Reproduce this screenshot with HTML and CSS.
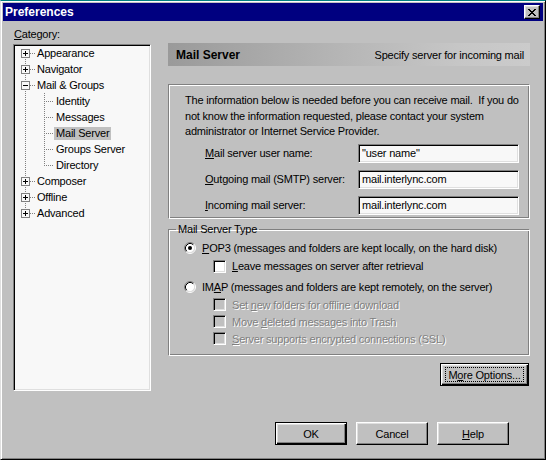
FILE: index.html
```html
<!DOCTYPE html>
<html>
<head>
<meta charset="utf-8">
<title>Preferences</title>
<link rel="stylesheet" href="styles.css">
</head>
<body>
<div class="window">
  <div class="titlebar">
    <span class="title">Preferences</span>
    <span class="close"><svg width="8" height="7" viewBox="0 0 8 7"><path d="M0 0h2v1h-2zM6 0h2v1h-2zM1 1h2v1h-2zM5 1h2v1h-2zM2 2h4v1h-4zM3 3h2v1h-2zM2 4h4v1h-4zM1 5h2v1h-2zM5 5h2v1h-2zM0 6h2v1h-2zM6 6h2v1h-2z" fill="#000"/></svg></span>
  </div>
  <div class="main">
    <div class="left">
      <div class="cat-label"><u>C</u>ategory:</div>
      <div class="tree">
        <div class="row"><span class="g first"><span class="pm"><svg width="9" height="9"><rect x="0.5" y="0.5" width="8" height="8" fill="#f8f8f8" stroke="#808080"/><rect x="2" y="4" width="5" height="1"/><rect x="4" y="2" width="1" height="5"/></svg></span></span><span class="lbl">Appearance</span></div>
        <div class="row"><span class="g mid"><span class="pm"><svg width="9" height="9"><rect x="0.5" y="0.5" width="8" height="8" fill="#f8f8f8" stroke="#808080"/><rect x="2" y="4" width="5" height="1"/><rect x="4" y="2" width="1" height="5"/></svg></span></span><span class="lbl">Navigator</span></div>
        <div class="row"><span class="g mid"><span class="pm"><svg width="9" height="9"><rect x="0.5" y="0.5" width="8" height="8" fill="#f8f8f8" stroke="#808080"/><rect x="2" y="4" width="5" height="1"/></svg></span></span><span class="lbl">Mail &amp; Groups</span></div>
        <div class="row"><span class="g vline"></span><span class="g2 mid"></span><span class="lbl">Identity</span></div>
        <div class="row"><span class="g vline"></span><span class="g2 mid"></span><span class="lbl">Messages</span></div>
        <div class="row"><span class="g vline"></span><span class="g2 mid"></span><span class="lbl sel">Mail Server</span></div>
        <div class="row"><span class="g vline"></span><span class="g2 mid"></span><span class="lbl">Groups Server</span></div>
        <div class="row"><span class="g vline"></span><span class="g2 last"></span><span class="lbl">Directory</span></div>
        <div class="row"><span class="g mid"><span class="pm"><svg width="9" height="9"><rect x="0.5" y="0.5" width="8" height="8" fill="#f8f8f8" stroke="#808080"/><rect x="2" y="4" width="5" height="1"/><rect x="4" y="2" width="1" height="5"/></svg></span></span><span class="lbl">Composer</span></div>
        <div class="row"><span class="g mid"><span class="pm"><svg width="9" height="9"><rect x="0.5" y="0.5" width="8" height="8" fill="#f8f8f8" stroke="#808080"/><rect x="2" y="4" width="5" height="1"/><rect x="4" y="2" width="1" height="5"/></svg></span></span><span class="lbl">Offline</span></div>
        <div class="row"><span class="g last"><span class="pm"><svg width="9" height="9"><rect x="0.5" y="0.5" width="8" height="8" fill="#f8f8f8" stroke="#808080"/><rect x="2" y="4" width="5" height="1"/><rect x="4" y="2" width="1" height="5"/></svg></span></span><span class="lbl">Advanced</span></div>
      </div>
    </div>
    <div class="right">
      <div class="header"><span class="h-title">Mail Server</span><span class="h-desc">Specify server for incoming mail</span></div>
      <div class="infobox">
        <p class="info">The information below is needed before you can receive mail.&nbsp; If you do<br>not know the information requested, please contact your system<br>administrator or Internet Service Provider.</p>
        <div class="frow"><span class="flabel"><u>M</u>ail server user name:</span><span class="input">"user name"</span></div>
        <div class="frow"><span class="flabel"><u>O</u>utgoing mail (SMTP) server:</span><span class="input">mail.interlync.com</span></div>
        <div class="frow"><span class="flabel"><u>I</u>ncoming mail server:</span><span class="input">mail.interlync.com</span></div>
      </div>
      <fieldset class="type">
        <legend>Mail Server Type</legend>
        <div class="opt lv1"><svg class="radio" width="12" height="12" viewBox="0 0 12 12"><circle cx="6" cy="6" r="4.5" fill="#fff"/><path d="M2.11 9.89A5.5 5.5 0 0 1 9.89 2.11" fill="none" stroke="#808080"/><path d="M9.89 2.11A5.5 5.5 0 0 1 2.11 9.89" fill="none" stroke="#fff"/><path d="M2.82 9.18A4.5 4.5 0 0 1 9.18 2.82" fill="none" stroke="#000"/><path d="M9.18 2.82A4.5 4.5 0 0 1 2.82 9.18" fill="none" stroke="#dfdfdf"/><circle cx="6" cy="6" r="2" fill="#000"/></svg><span class="otext"><u>P</u>OP3 (messages and folders are kept locally, on the hard disk)</span></div>
        <div class="opt lv2"><span class="check"></span><span class="otext"><u>L</u>eave messages on server after retrieval</span></div>
        <div class="opt lv1 gap"><svg class="radio" width="12" height="12" viewBox="0 0 12 12"><circle cx="6" cy="6" r="4.5" fill="#fff"/><path d="M2.11 9.89A5.5 5.5 0 0 1 9.89 2.11" fill="none" stroke="#808080"/><path d="M9.89 2.11A5.5 5.5 0 0 1 2.11 9.89" fill="none" stroke="#fff"/><path d="M2.82 9.18A4.5 4.5 0 0 1 9.18 2.82" fill="none" stroke="#000"/><path d="M9.18 2.82A4.5 4.5 0 0 1 2.82 9.18" fill="none" stroke="#dfdfdf"/></svg><span class="otext">IM<u>A</u>P (messages and folders are kept remotely, on the server)</span></div>
        <div class="opt lv2 dis"><span class="check off"></span><span class="otext">Set <u>n</u>ew folders for offline download</span></div>
        <div class="opt lv2 dis"><span class="check off"></span><span class="otext">Move <u>d</u>eleted messages into Trash</span></div>
        <div class="opt lv2 dis"><span class="check off"></span><span class="otext"><u>S</u>erver supports encrypted connections (SSL)</span></div>
      </fieldset>
      <div class="more-row"><span class="btn default more"><span class="focus">M<u>o</u>re Options...</span></span></div>
    </div>
  </div>
  <div class="buttons">
    <span class="btn default">OK</span>
    <span class="btn">Cancel</span>
    <span class="btn"><u>H</u>elp</span>
  </div>
</div>
</body>
</html>
```
FILE: styles.css
```css
html, body {
  margin: 0;
  padding: 0;
}
body {
  background: #c0c0c0;
  font-family: "Liberation Sans", Arial, sans-serif;
  font-size: 11px;
  letter-spacing: -0.2px;
  color: #000;
}
u { text-decoration: underline; text-underline-offset: 1px; }

.window {
  width: 546px;
  height: 460px;
  box-sizing: border-box;
  border: 1px solid;
  border-color: #008080 #000 #000 #dfdfdf;
  box-shadow: inset 1px 1px #fff, inset -1px -1px #808080;
  padding: 2px;
  display: flex;
  flex-direction: column;
  background: #c0c0c0;
}

.titlebar {
  height: 18px;
  flex: none;
  background: #000080;
  color: #fff;
  display: flex;
  align-items: center;
  justify-content: space-between;
  padding: 0 3px 0 2px;
}
.title {
  font-weight: bold;
  font-size: 12px;
  letter-spacing: 0;
}
.close {
  width: 16px;
  height: 14px;
  box-sizing: border-box;
  background: #c0c0c0;
  border: 1px solid;
  border-color: #fff #000 #000 #fff;
  box-shadow: inset -1px -1px #808080, inset 1px 1px #dfdfdf;
  display: flex;
  align-items: center;
  justify-content: center;
}

.main {
  display: flex;
  gap: 17px;
  padding: 0 13px 0 10px;
  height: 370px;
  flex: none;
}
.left {
  width: 138px;
  flex: none;
  display: flex;
  flex-direction: column;
}
.cat-label {
  margin-top: 7px;
  line-height: 13px;
  padding-left: 1px;
}
.tree {
  margin-top: 3px;
  height: 347px;
  box-sizing: border-box;
  border: 1px solid;
  border-color: #808080 #fff #fff #808080;
  box-shadow: inset 1px 1px #000, inset -1px -1px #dfdfdf;
  background: #f8f8f8;
  padding: 0 1px;
}
.row {
  display: flex;
  height: 16px;
  align-items: center;
}
.g, .g2 {
  flex: none;
  height: 16px;
  background-repeat: no-repeat;
}
.g { width: 20px; }
.g2 { width: 19px; }
.pm {
  display: block;
  width: 9px;
  height: 9px;
  margin: 4px 0 0 6px;
}
.pm svg { display: block; }

.g.first {
  background-image:
    repeating-linear-gradient(to bottom, #808080 0 1px, transparent 1px 2px),
    repeating-linear-gradient(to right, #808080 0 1px, transparent 1px 2px);
  background-size: 1px 8px, 5px 1px;
  background-position: 10px 8px, 15px 8px;
}
.g.mid {
  background-image:
    repeating-linear-gradient(to bottom, #808080 0 1px, transparent 1px 2px),
    repeating-linear-gradient(to right, #808080 0 1px, transparent 1px 2px);
  background-size: 1px 16px, 5px 1px;
  background-position: 10px 0, 15px 8px;
}
.g.last {
  background-image:
    repeating-linear-gradient(to bottom, #808080 0 1px, transparent 1px 2px),
    repeating-linear-gradient(to right, #808080 0 1px, transparent 1px 2px);
  background-size: 1px 8px, 5px 1px;
  background-position: 10px 0, 15px 8px;
}
.g.vline {
  background-image: repeating-linear-gradient(to bottom, #808080 0 1px, transparent 1px 2px);
  background-size: 1px 16px;
  background-position: 10px 0;
}
.g2.mid {
  background-image:
    repeating-linear-gradient(to bottom, #808080 0 1px, transparent 1px 2px),
    repeating-linear-gradient(to right, #808080 0 1px, transparent 1px 2px);
  background-size: 1px 16px, 9px 1px;
  background-position: 9px 0, 9px 8px;
}
.g2.last {
  background-image:
    repeating-linear-gradient(to bottom, #808080 0 1px, transparent 1px 2px),
    repeating-linear-gradient(to right, #808080 0 1px, transparent 1px 2px);
  background-size: 1px 9px, 9px 1px;
  background-position: 9px 0, 9px 8px;
}
.lbl {
  padding: 0 2px;
  line-height: 13px;
  white-space: nowrap;
}
.lbl.sel { background: #c0c0c0; }

.right {
  width: 362px;
  flex: none;
  display: flex;
  flex-direction: column;
}
.header {
  margin-top: 22px;
  height: 23px;
  display: flex;
  align-items: center;
  justify-content: space-between;
  padding: 0 6px 0 8px;
  background: linear-gradient(to right, #9a9a9a 0%, #b4b4b4 45%, #c6c6c6 80%, #cbcbcb 100%);
}
.h-title {
  font-weight: bold;
  font-size: 12px;
  letter-spacing: 0;
}
.infobox {
  margin-top: 18px;
  height: 135px;
  box-sizing: border-box;
  border: 1px solid;
  border-color: #808080 #fff #fff #808080;
  box-shadow: inset 1px 1px #fff, inset -1px -1px #808080;
  padding: 8px 0 0 16px;
}
.info {
  margin: 0 0 4px 0;
  line-height: 15.5px;
  white-space: nowrap;
}
.frow {
  display: flex;
  align-items: center;
  height: 19px;
  margin-bottom: 7px;
  padding-left: 20px;
}
.flabel {
  width: 153px;
  flex: none;
}
.input {
  width: 161px;
  height: 19px;
  box-sizing: border-box;
  border: 1px solid;
  border-color: #808080 #fff #fff #808080;
  box-shadow: inset 1px 1px #000, inset -1px -1px #dfdfdf;
  background: #f8f8f8;
  padding: 0 0 0 3px;
  line-height: 17px;
}

.type {
  margin: 4px 0 0 0;
  padding: 3px 0 8px 0;
  border: 1px solid;
  border-color: #808080 #fff #fff #808080;
  box-shadow: inset 1px 1px #fff, inset -1px -1px #808080;
  min-width: 0;
}
.type legend {
  margin-left: 7px;
  padding: 0 2px;
  line-height: 13px;
}
.opt {
  display: flex;
  align-items: center;
  height: 18px;
}
.opt.lv1 { padding-left: 15px; }
.opt.lv2 { padding-left: 44px; }
.opt.gap { margin-top: 3px; }
.opt.dis { height: 17px; }
.radio { flex: none; display: block; }
.opt.lv1 .otext { margin-left: 6px; }
.opt.lv2 .otext { margin-left: 6px; }
.check {
  flex: none;
  width: 13px;
  height: 13px;
  box-sizing: border-box;
  border: 1px solid;
  border-color: #808080 #fff #fff #808080;
  box-shadow: inset 1px 1px #000, inset -1px -1px #dfdfdf;
  background: #fff;
}
.check.off { background: #c0c0c0; }
.opt.dis .otext {
  color: #808080;
  text-shadow: 1px 1px 0 #fff;
}

.more-row {
  display: flex;
  justify-content: flex-end;
  margin-top: 7px;
  padding-right: 1px;
}

.btn {
  display: flex;
  align-items: center;
  justify-content: center;
  width: 72px;
  height: 23px;
  box-sizing: border-box;
  background: #c0c0c0;
  border: 1px solid;
  border-color: #fff #000 #000 #fff;
  box-shadow: inset -1px -1px #808080, inset 1px 1px #dfdfdf;
}
.btn.default {
  border-color: #000;
  box-shadow: inset 1px 1px #fff, inset -1px -1px #000, inset -2px -2px #808080, inset 2px 2px #dfdfdf;
}
.btn.more {
  width: 89px;
}
.focus {
  display: flex;
  align-items: center;
  justify-content: center;
  width: 77px;
  height: 13px;
  outline: 1px dotted #000;
}

.buttons {
  display: flex;
  justify-content: flex-end;
  gap: 9px;
  margin-top: 31px;
  padding-right: 34px;
}
```
